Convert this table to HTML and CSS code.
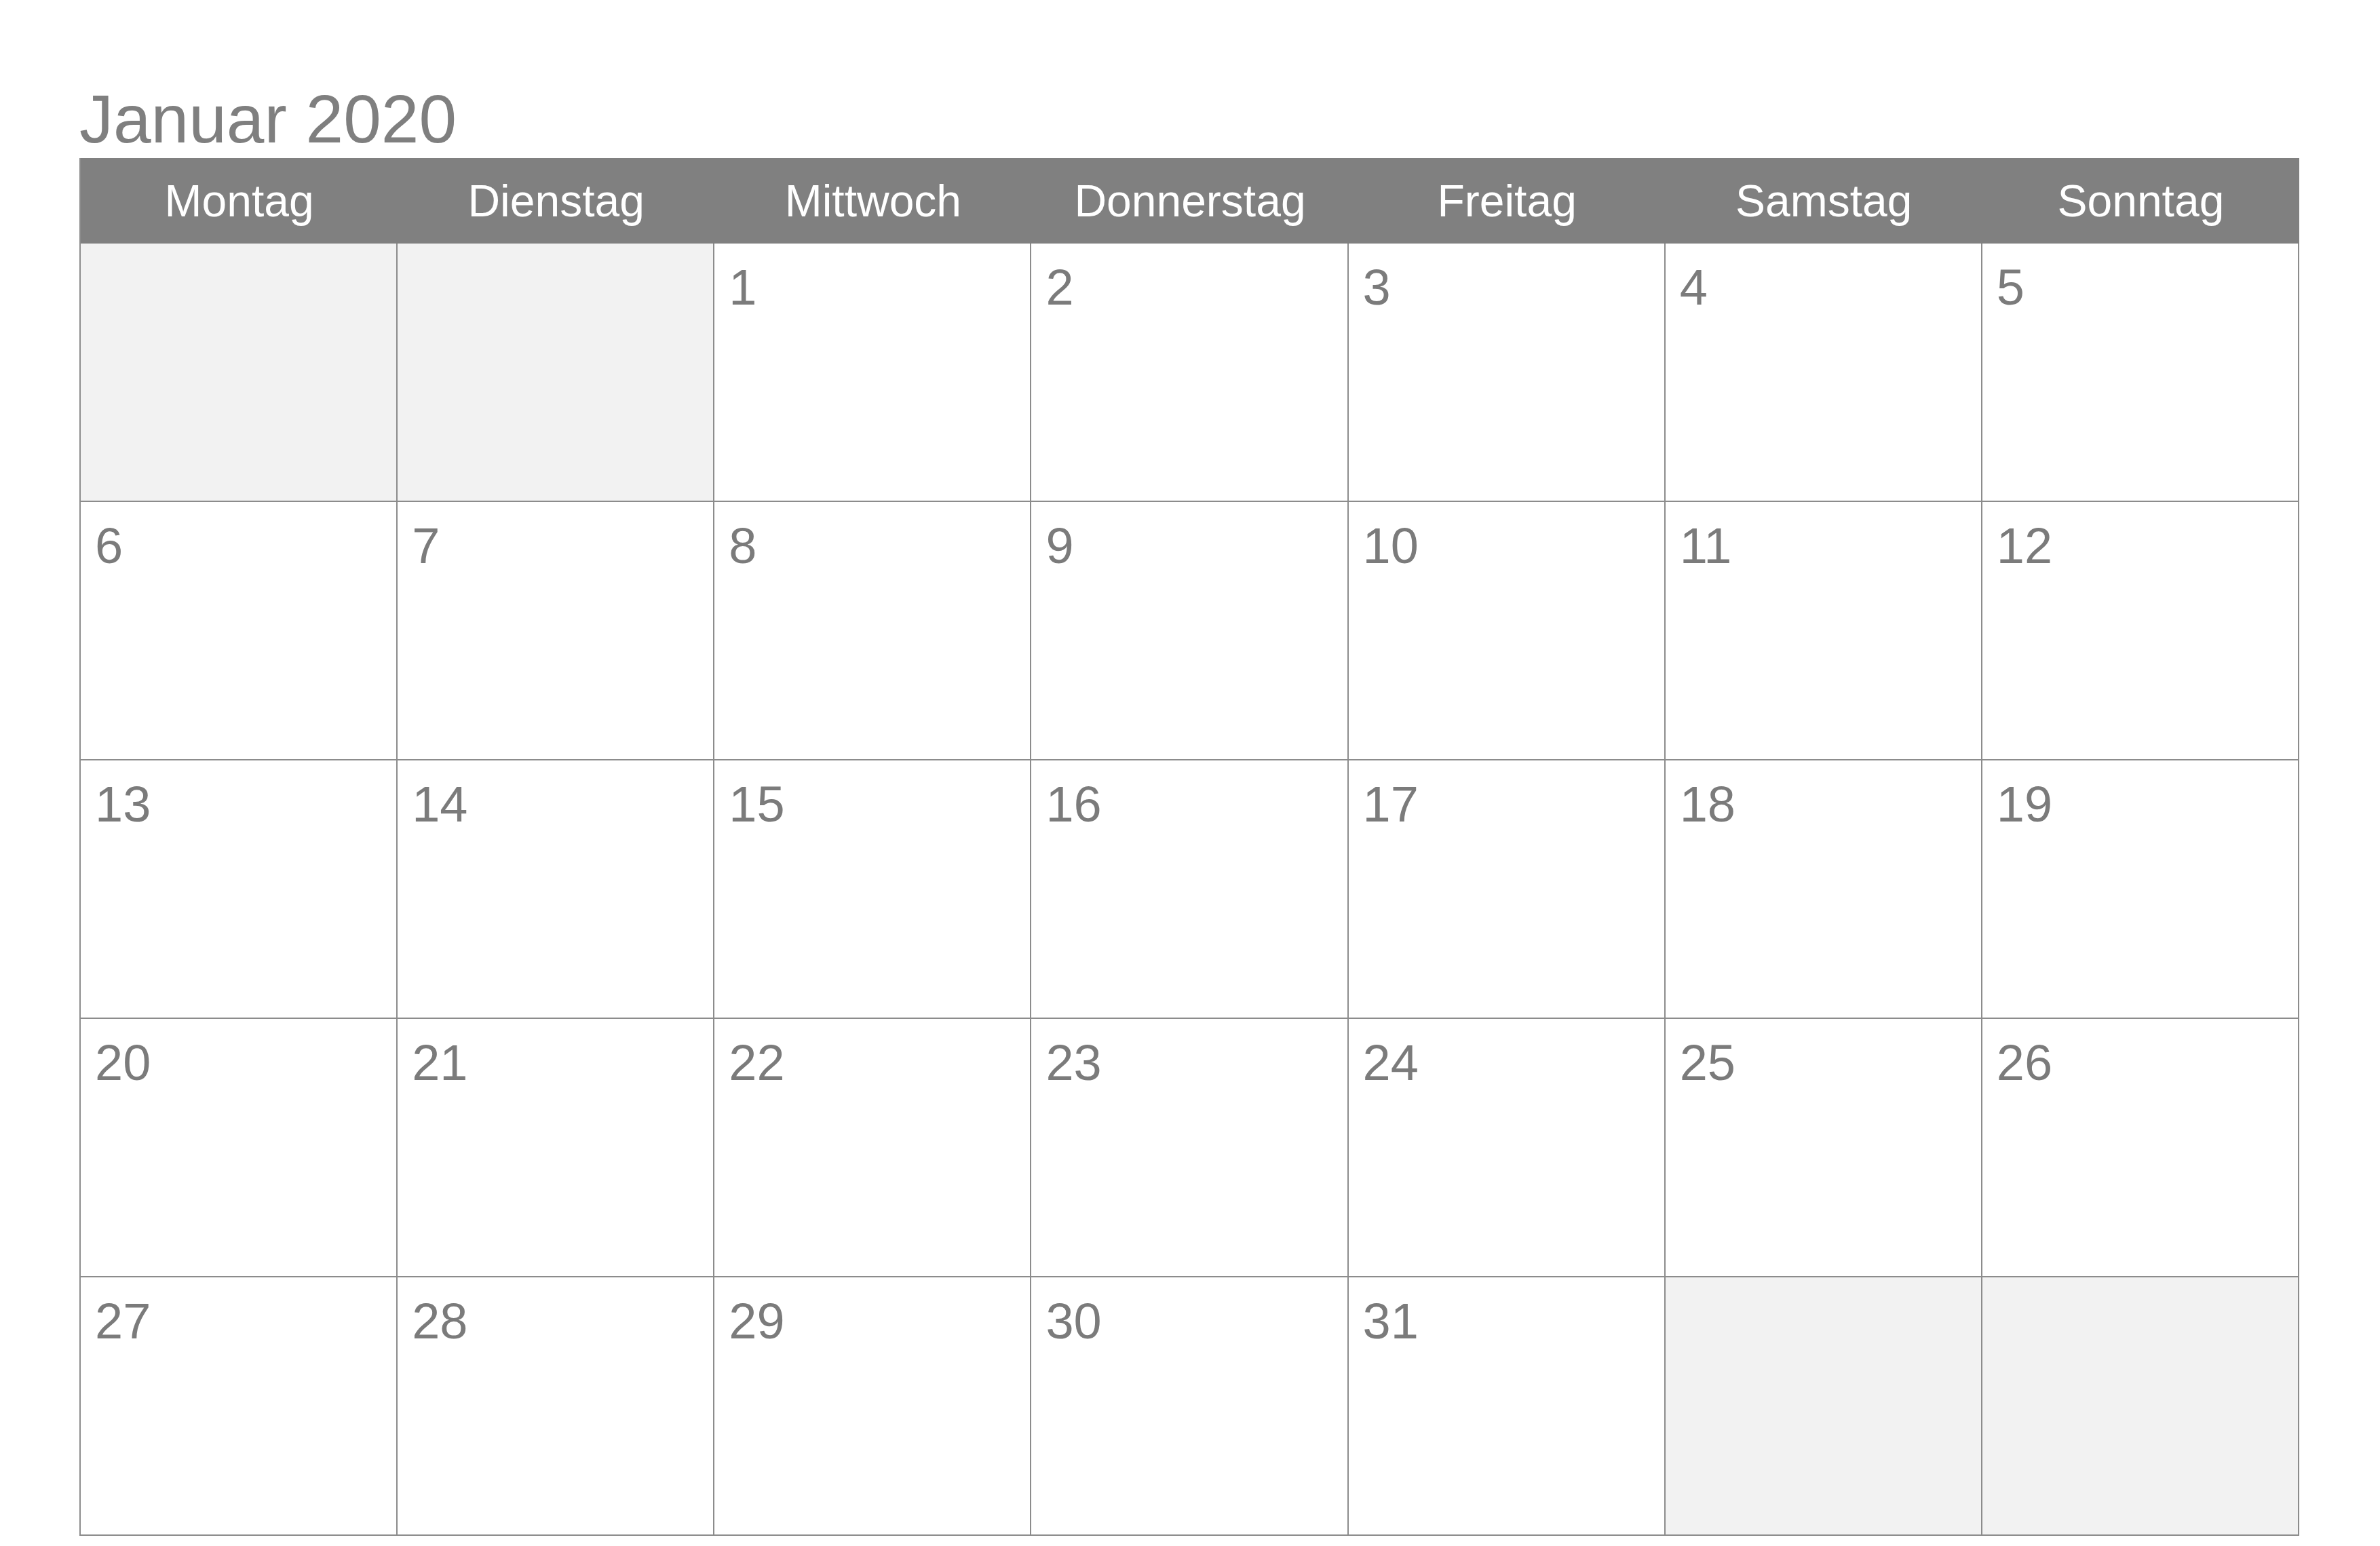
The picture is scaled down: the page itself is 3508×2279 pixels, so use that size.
FILE: index.html
```html
<!DOCTYPE html>
<html lang="de">
<head>
<meta charset="utf-8">
<title>Januar 2020</title>
<link rel="stylesheet" href="styles.css">
</head>
<body>
<div class="page">
  <h1 class="title">Januar 2020</h1>
  <div class="cal">
    <div class="head">Montag</div>
    <div class="head">Dienstag</div>
    <div class="head">Mittwoch</div>
    <div class="head">Donnerstag</div>
    <div class="head">Freitag</div>
    <div class="head">Samstag</div>
    <div class="head">Sonntag</div>

    <div class="day empty"></div>
    <div class="day empty"></div>
    <div class="day">1</div>
    <div class="day">2</div>
    <div class="day">3</div>
    <div class="day">4</div>
    <div class="day">5</div>

    <div class="day">6</div>
    <div class="day">7</div>
    <div class="day">8</div>
    <div class="day">9</div>
    <div class="day">10</div>
    <div class="day">11</div>
    <div class="day">12</div>

    <div class="day">13</div>
    <div class="day">14</div>
    <div class="day">15</div>
    <div class="day">16</div>
    <div class="day">17</div>
    <div class="day">18</div>
    <div class="day">19</div>

    <div class="day">20</div>
    <div class="day">21</div>
    <div class="day">22</div>
    <div class="day">23</div>
    <div class="day">24</div>
    <div class="day">25</div>
    <div class="day">26</div>

    <div class="day">27</div>
    <div class="day">28</div>
    <div class="day">29</div>
    <div class="day">30</div>
    <div class="day">31</div>
    <div class="day empty"></div>
    <div class="day empty"></div>
  </div>
</div>
</body>
</html>
```

FILE: styles.css
```css
html, body {
  margin: 0;
  padding: 0;
  background: #ffffff;
}

body {
  font-family: "Liberation Sans", Arial, sans-serif;
}

.page {
  padding: 125px 0 0 117px;
}

.title {
  margin: 0 0 8px 0;
  font-size: 100px;
  line-height: 100px;
  height: 100px;
  font-weight: normal;
  color: #7f7f7f;
}

.cal {
  display: grid;
  grid-template-columns: repeat(7, 1fr);
  width: 3272px;
  box-sizing: border-box;
  border-left: 2px solid #8c8c8c;
}

.head {
  height: 126px;
  line-height: 126px;
  background: #808080;
  color: #ffffff;
  font-size: 66px;
  text-align: center;
}

.day {
  box-sizing: border-box;
  height: 381px;
  border-right: 2px solid #8c8c8c;
  border-bottom: 2px solid #8c8c8c;
  padding: 28px 0 0 21px;
  font-size: 74px;
  line-height: 1;
  color: #7b7b7b;
  background: #ffffff;
}

.day.empty {
  background: #f2f2f2;
}
```
